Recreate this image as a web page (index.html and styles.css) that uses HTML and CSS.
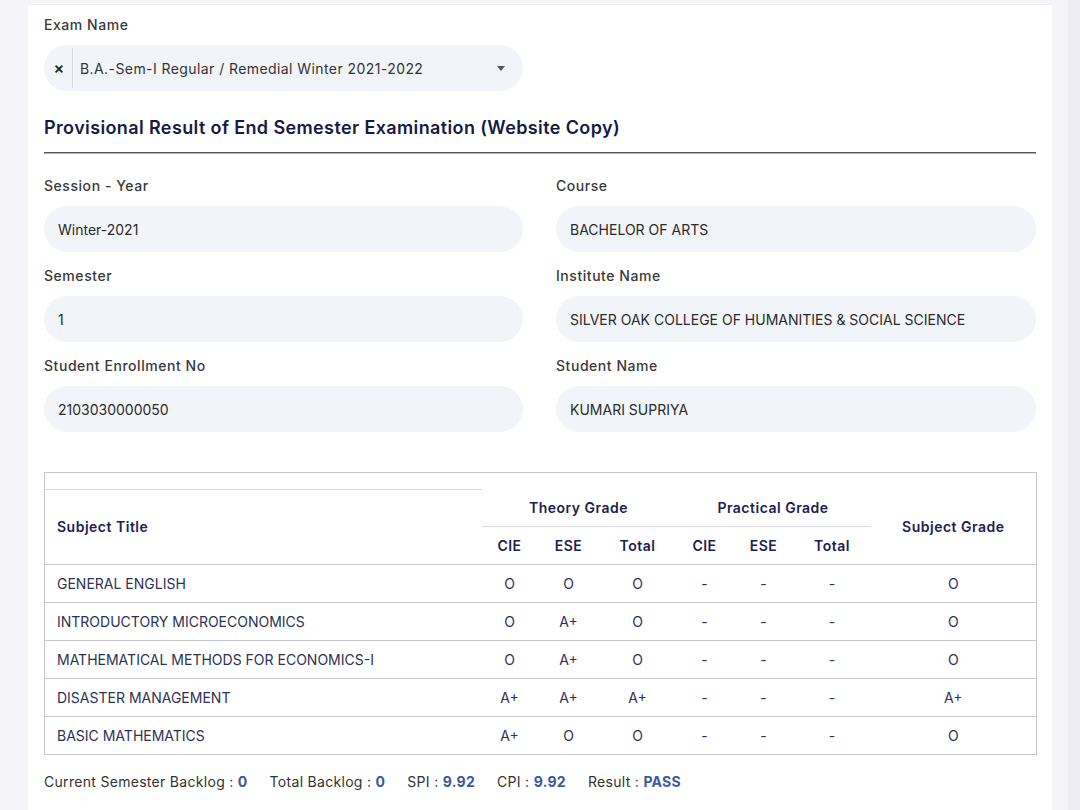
FILE: index.html
```html
<!DOCTYPE html>
<html>
<head>
<meta charset="utf-8">
<link rel="stylesheet" href="styles.css">
</head>
<body>
<div class="page">
  <div class="card">
    <div class="label">Exam Name</div>
    <div class="select">
      <span class="clear">×</span>
      <span class="sel-text">B.A.-Sem-I Regular / Remedial Winter 2021-2022</span>
      <span class="arrow"></span>
    </div>
    <h2 class="heading">Provisional Result of End Semester Examination (Website Copy)</h2>
    <div class="rule"></div>
    <div class="fields">
      <div class="field"><div class="label">Session - Year</div><div class="input">Winter-2021</div></div>
      <div class="field"><div class="label">Course</div><div class="input">BACHELOR OF ARTS</div></div>
      <div class="field"><div class="label">Semester</div><div class="input">1</div></div>
      <div class="field"><div class="label">Institute Name</div><div class="input">SILVER OAK COLLEGE OF HUMANITIES &amp; SOCIAL SCIENCE</div></div>
      <div class="field"><div class="label">Student Enrollment No</div><div class="input">2103030000050</div></div>
      <div class="field"><div class="label">Student Name</div><div class="input">KUMARI SUPRIYA</div></div>
    </div>
    <table class="result">
      <colgroup>
        <col class="c-title"><col class="c1"><col class="c2"><col class="c3"><col class="c4"><col class="c5"><col class="c6"><col class="c-grade">
      </colgroup>
      <thead>
        <tr class="spacer"><td></td><td colspan="7"></td></tr>
        <tr class="h1">
          <th rowspan="2" class="th-title">Subject Title</th>
          <th colspan="3" class="group">Theory Grade</th>
          <th colspan="3" class="group">Practical Grade</th>
          <th rowspan="2" class="th-grade">Subject Grade</th>
        </tr>
        <tr class="h2">
          <th>CIE</th><th>ESE</th><th>Total</th><th>CIE</th><th>ESE</th><th>Total</th>
        </tr>
      </thead>
      <tbody>
        <tr><td class="title">GENERAL ENGLISH</td><td>O</td><td>O</td><td>O</td><td>-</td><td>-</td><td>-</td><td>O</td></tr>
        <tr><td class="title">INTRODUCTORY MICROECONOMICS</td><td>O</td><td>A+</td><td>O</td><td>-</td><td>-</td><td>-</td><td>O</td></tr>
        <tr><td class="title">MATHEMATICAL METHODS FOR ECONOMICS-I</td><td>O</td><td>A+</td><td>O</td><td>-</td><td>-</td><td>-</td><td>O</td></tr>
        <tr><td class="title">DISASTER MANAGEMENT</td><td>A+</td><td>A+</td><td>A+</td><td>-</td><td>-</td><td>-</td><td>A+</td></tr>
        <tr><td class="title">BASIC MATHEMATICS</td><td>A+</td><td>O</td><td>O</td><td>-</td><td>-</td><td>-</td><td>O</td></tr>
      </tbody>
    </table>
    <div class="summary">
      <span>Current Semester Backlog : <b>0</b></span>
      <span>Total Backlog : <b>0</b></span>
      <span>SPI : <b>9.92</b></span>
      <span>CPI : <b>9.92</b></span>
      <span>Result : <b>PASS</b></span>
    </div>
  </div>
</div>
</body>
</html>
```
FILE: styles.css
```css
html, body {
  margin: 0;
  padding: 0;
}
body {
  background: linear-gradient(to right, #f4f4f9 1068px, #ececf2 1068px);
  font-family: "Inter", "Open Sans", sans-serif;
  color: #333;
  height: 810px;
  overflow: hidden;
}
.page {
  padding: 4px 28px 0 28px;
}
.card {
  background: #fff;
  border-top: 1px solid #ececf0;
  padding: 10px 16px 40px 16px;
  min-height: 800px;
}
.label {
  font-size: 14px;
  line-height: 20px;
  color: #3a3a3a;
  font-weight: 500;
  letter-spacing: 0.55px;
}
.select {
  margin-top: 10px;
  width: 479px;
  height: 46px;
  background: #f1f4f8;
  border-radius: 23px;
  display: flex;
  align-items: center;
  box-sizing: border-box;
}
.clear {
  width: 26px;
  padding-left: 2px;
  font-size: 16px;
  font-weight: 600;
  color: #222;
  align-self: stretch;
  display: flex;
  align-items: center;
  justify-content: center;
  border-right: 1px solid #d6d8dc;
  margin: 3px 0;
}
.sel-text {
  padding-left: 7px;
  font-size: 14px;
  color: #333;
  flex: 1;
  letter-spacing: 0.42px;
}
.arrow {
  width: 0;
  height: 0;
  border-left: 4px solid transparent;
  border-right: 4px solid transparent;
  border-top: 5px solid #555;
  margin-right: 18px;
}
.heading {
  margin: 24px 0 0 0;
  font-size: 18px;
  line-height: 26px;
  font-weight: 600;
  color: #161a45;
  letter-spacing: 0.38px;
}
.rule {
  margin-top: 11px;
  height: 1px;
  background: #555;
  box-shadow: 0 1px 0 #b5b5b5;
}
.fields {
  margin-top: 23px;
  display: grid;
  grid-template-columns: 479px 480px;
  column-gap: 33px;
  row-gap: 14px;
}
.field .input {
  margin-top: 10px;
  height: 46px;
  border-radius: 23px;
  background: #f1f4f8;
  display: flex;
  align-items: center;
  padding-left: 14px;
  font-size: 14px;
  color: #2a2a2a;
}
.result {
  margin-top: 40px;
  width: 992px;
  border-collapse: collapse;
  table-layout: fixed;
  border: 1px solid #c8c8cc;
  color: #2c3155;
  font-size: 14px;
}
.c-title { width: 437px; }
.c1 { width: 56px; }
.c2 { width: 62px; }
.c3 { width: 76px; }
.c4 { width: 58px; }
.c5 { width: 60px; }
.c6 { width: 77px; }
.c-grade { width: 166px; }
.result .spacer td {
  height: 16px;
  padding: 0;
}
.result .spacer td:first-child {
  border-bottom: 1px solid #d8d8dc;
}
.result th {
  font-weight: 600;
  color: #1c2150;
  font-size: 14px;
  text-align: center;
  padding: 0;
  letter-spacing: 0.5px;
}
.h1 th.group {
  height: 36px;
  border-bottom: 1px solid #dcdce0;
}
.h2 th {
  height: 37px;
}
.result th.th-title {
  text-align: left;
  padding-left: 12px;
}
thead {
  border-bottom: 1px solid #c8c8cc;
}
.result td {
  text-align: center;
  height: 37px;
  padding: 0;
}
.result tbody tr {
  border-bottom: 1px solid #c8c8cc;
}
.result td.title {
  text-align: left;
  padding-left: 12px;
}
.summary {
  margin-top: 18px;
  font-size: 14px;
  color: #333;
  display: flex;
  gap: 22px;
  letter-spacing: 0.3px;
}
.summary b {
  color: #3d5a98;
  font-weight: 700;
}
```
